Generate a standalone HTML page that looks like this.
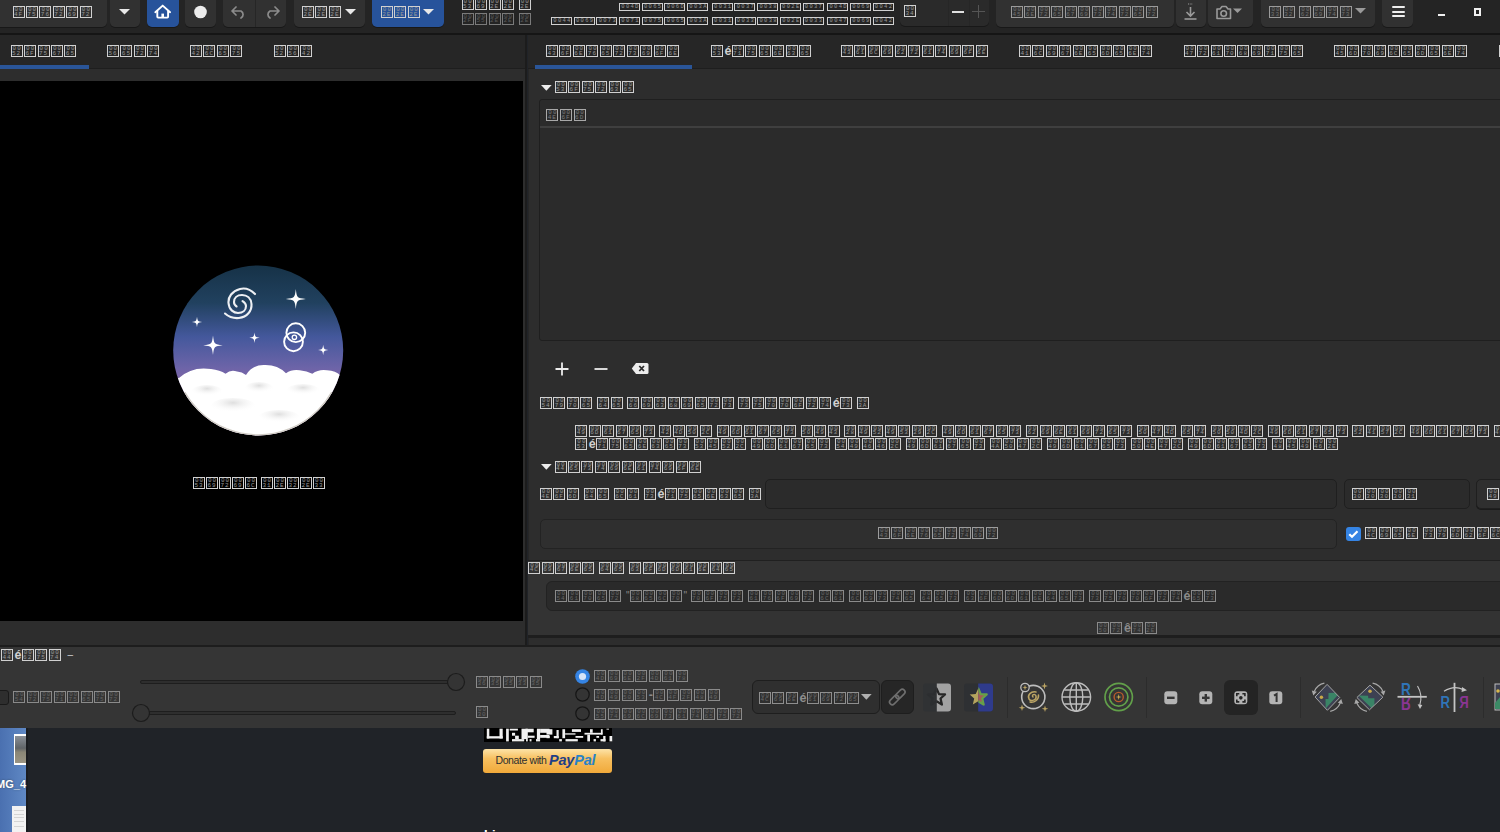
<!DOCTYPE html><html><head><meta charset="utf-8"><style>
*{margin:0;padding:0;box-sizing:border-box}
html,body{width:1500px;height:832px;overflow:hidden;background:#202328;font-family:"Liberation Sans",sans-serif}
body>div,body>p,body>svg{position:absolute}
p.t{white-space:nowrap;font-size:0;line-height:0;height:12px}
p.t i{display:inline-block;width:12px;height:12px;border:1px solid currentColor;margin-right:var(--g);-webkit-text-fill-color:var(--d);font:normal 6px/4.7px "Liberation Mono",monospace;text-align:center;overflow:hidden;vertical-align:top;padding-top:1px;letter-spacing:1px;text-indent:1px}
p.t s{display:inline-block;height:12px;vertical-align:top}
p.t u{display:inline-block;text-decoration:none;font:bold 12.5px/12px "Liberation Sans",sans-serif;vertical-align:top;margin-right:0.3px;height:12px}
p.t u.q{font:normal 10px/12px "Liberation Sans",sans-serif;margin-right:0}
p.sm{white-space:nowrap;font-size:0;line-height:0;height:8px}
p.sm i{display:inline-block;width:21px;height:8px;border:1px solid currentColor;margin-right:1.7px;font:normal 5.5px/6px "Liberation Mono",monospace;text-align:center;overflow:hidden;vertical-align:top;letter-spacing:1.3px;text-indent:1.3px;-webkit-text-fill-color:#9a9a9a}
p.sm s{display:inline-block;height:8px;vertical-align:top}
</style></head><body><div style="left:0px;top:0px;width:1500px;height:32.5px;background:#242424"></div>
<div style="left:0px;top:32.5px;width:1500px;height:2.5px;background:#151515"></div>
<div style="left:-6px;top:-6px;width:113px;height:33px;background:#313131;border-radius:5px;box-shadow:0 1px 0 #181818"></div>
<p class="t" style="left:12.5px;top:6px;color:#d0d0d0;--g:1.47px;--d:#999999;"><i>00<br>4F</i><i>00<br>75</i><i>00<br>76</i><i>00<br>72</i><i>00<br>69</i><i>00<br>72</i></p>
<div style="left:109.5px;top:-6px;width:30px;height:33px;background:#313131;border-radius:5px;box-shadow:0 1px 0 #181818"></div>
<svg style="left:119px;top:9px" width="11" height="6"><polygon points="0,0 11,0 5.5,5.5" fill="#e8e8e8"/></svg>
<div style="left:146.7px;top:-6px;width:32px;height:33px;background:#27539b;border-radius:5px;box-shadow:0 1px 0 #181818"></div>
<svg style="left:150px;top:0px" width="26" height="24" viewBox="150 0 26 24"><path d="M155.3 12.2 L162.7 5.6 L170.1 12.2" fill="none" stroke="#fff" stroke-width="1.9" stroke-linecap="round" stroke-linejoin="round"/><path d="M157.3 11 V16.8 Q157.3 17.6 158.1 17.6 H167.3 Q168.1 17.6 168.1 16.8 V11" fill="none" stroke="#fff" stroke-width="1.9"/><path d="M162.7 17.6 V13.6" stroke="#fff" stroke-width="2.6"/></svg>
<div style="left:185px;top:-6px;width:31px;height:33px;background:#313131;border-radius:5px;box-shadow:0 1px 0 #181818"></div>
<svg style="left:193px;top:5px" width="15" height="15"><circle cx="7.5" cy="7" r="6.3" fill="#ececec"/></svg>
<div style="left:223px;top:-6px;width:63px;height:33px;background:#313131;border-radius:5px;box-shadow:0 1px 0 #181818"></div>
<div style="left:255px;top:0px;width:1px;height:27px;background:#262626"></div>
<svg style="left:230px;top:5px" width="18" height="14" viewBox="0 0 18 14"><path d="M6 2 L2 6 L6 10 M2.5 6 H11 A4 4 0 0 1 11 13" fill="none" stroke="#8c8c8c" stroke-width="1.7" stroke-linecap="round" stroke-linejoin="round"/></svg>
<svg style="left:263px;top:5px" width="18" height="14" viewBox="0 0 18 14"><path d="M12 2 L16 6 L12 10 M15.5 6 H7 A4 4 0 0 0 7 13" fill="none" stroke="#8c8c8c" stroke-width="1.7" stroke-linecap="round" stroke-linejoin="round"/></svg>
<div style="left:293.8px;top:-6px;width:71px;height:33px;background:#313131;border-radius:5px;box-shadow:0 1px 0 #181818"></div>
<p class="t" style="left:302px;top:6px;color:#d0d0d0;--g:1.47px;--d:#999999;"><i>00<br>2E</i><i>00<br>2E</i><i>00<br>2E</i></p>
<svg style="left:344.5px;top:9px" width="11" height="6"><polygon points="0,0 11,0 5.5,5.5" fill="#e8e8e8"/></svg>
<div style="left:371.7px;top:-6px;width:72.5px;height:33px;background:#27539b;border-radius:5px;box-shadow:0 1px 0 #181818"></div>
<p class="t" style="left:380.8px;top:6px;color:#d0d0d0;--g:1.47px;--d:#999999;"><i>00<br>2E</i><i>00<br>2E</i><i>00<br>2E</i></p>
<svg style="left:423px;top:9px" width="11" height="6"><polygon points="0,0 11,0 5.5,5.5" fill="#e8e8e8"/></svg>
<p class="t" style="left:461.6px;top:-1.6px;color:#d0d0d0;--g:1.47px;--d:#999999;"><i>00<br>53</i><i>00<br>69</i><i>00<br>2E</i><i>00<br>2E</i><s style="width:3.3px"></s><i>00<br>2E</i></p>
<p class="t" style="left:461.6px;top:12.7px;color:#7a7a7a;--g:1.47px;--d:#5a5a5a;"><i>00<br>2F</i><i>00<br>55</i><i>00<br>2E</i><i>00<br>2E</i><s style="width:3.3px"></s><i>00<br>2E</i></p>
<p class="sm" style="left:619px;top:2.9px;color:#d0d0d0"><i>004D</i><i>0065</i><i>006D</i><i>003A</i><s style="width:2px"></s><i>0031</i><i>0037</i><i>0038</i><i>002E</i><i>0037</i><s style="width:2px"></s><i>004D</i><i>0069</i><i>0042</i></p>
<p class="sm" style="left:551px;top:17px;color:#d0d0d0"><i>0044</i><i>0069</i><i>0073</i><i>0071</i><i>0075</i><i>0065</i><i>003A</i><s style="width:2px"></s><i>0031</i><i>0033</i><i>0038</i><i>002E</i><i>0033</i><s style="width:2px"></s><i>0047</i><i>0069</i><i>0042</i></p>
<div style="left:900.3px;top:-6px;width:88.5px;height:32px;background:#2a2a2a;border-radius:5px;box-shadow:0 1px 0 #181818"></div>
<p class="t" style="left:904px;top:5.2px;color:#d0d0d0;--g:1.47px;--d:#999999;"><i>00<br>34</i></p>
<div style="left:948px;top:0px;width:1px;height:26px;background:#262626"></div>
<div style="left:968.8px;top:0px;width:1px;height:26px;background:#262626"></div>
<div style="left:951.5px;top:10.5px;width:12.5px;height:2.2px;background:#e0e0e0"></div>
<div style="left:972px;top:10.5px;width:13px;height:1.6px;background:#555"></div>
<div style="left:977.7px;top:5px;width:1.6px;height:13px;background:#555"></div>
<div style="left:996px;top:-6px;width:177.7px;height:33px;background:#313131;border-radius:5px;box-shadow:0 1px 0 #181818"></div>
<p class="t" style="left:1011px;top:6px;color:#9a9a9a;--g:1.47px;--d:#717171;"><i>00<br>45</i><i>00<br>6E</i><i>00<br>72</i><i>00<br>65</i><i>00<br>67</i><i>00<br>69</i><i>00<br>73</i><i>00<br>74</i><i>00<br>72</i><i>00<br>65</i><i>00<br>72</i></p>
<div style="left:1175.8px;top:-6px;width:30.2px;height:33px;background:#313131;border-radius:5px;box-shadow:0 1px 0 #181818"></div>
<svg style="left:1183px;top:3px" width="15" height="17" viewBox="0 0 15 17"><path d="M7.5 4 V13 M3.5 9 L7.5 13 L11.5 9" fill="none" stroke="#9a9a9a" stroke-width="1.6"/><path d="M1.5 16 H13.5" stroke="#9a9a9a" stroke-width="1.6"/><path d="M5 1 H10" stroke="#9a9a9a" stroke-width="1.2" stroke-dasharray="1.2 1.2"/></svg>
<div style="left:1208px;top:-6px;width:45px;height:33px;background:#313131;border-radius:5px;box-shadow:0 1px 0 #181818"></div>
<svg style="left:1215px;top:4px" width="32" height="16" viewBox="0 0 32 16"><path d="M2 5 H5 L7 2.5 H11 L13 5 H15.5 V14.5 H2 Z" fill="none" stroke="#9a9a9a" stroke-width="1.6" stroke-linejoin="round"/><circle cx="8.7" cy="9.5" r="2.8" fill="none" stroke="#9a9a9a" stroke-width="1.6"/><polygon points="18,4.5 27,4.5 22.5,9" fill="#9a9a9a"/></svg>
<div style="left:1261px;top:-6px;width:114px;height:33px;background:#313131;border-radius:5px;box-shadow:0 1px 0 #181818"></div>
<p class="t" style="left:1269.4px;top:6.4px;color:#9a9a9a;--g:1.47px;--d:#717171;"><i>00<br>33</i><i>00<br>32</i><s style="width:3px"></s><i>00<br>62</i><i>00<br>69</i><i>00<br>74</i><i>00<br>73</i></p>
<svg style="left:1355px;top:8px" width="11" height="6"><polygon points="0,0 11,0 5.5,5.5" fill="#9a9a9a"/></svg>
<div style="left:1382.4px;top:-6px;width:30.6px;height:33px;background:#313131;border-radius:5px;box-shadow:0 1px 0 #181818"></div>
<div style="left:1391.5px;top:6.3px;width:13px;height:2px;background:#eeeeee;border-radius:1px"></div>
<div style="left:1391.5px;top:10.7px;width:13px;height:2px;background:#eeeeee;border-radius:1px"></div>
<div style="left:1391.5px;top:15.2px;width:13px;height:2px;background:#eeeeee;border-radius:1px"></div>
<div style="left:1437.6px;top:13.6px;width:7.4px;height:2px;background:#f0f0f0"></div>
<div style="left:1473.6px;top:8px;width:7.6px;height:7.6px;border:2px solid #f0f0f0"></div>
<div style="left:0px;top:35px;width:525px;height:34px;background:#262626"></div>
<div style="left:0px;top:68px;width:525px;height:1px;background:#1e1e1e"></div>
<div style="left:0px;top:65px;width:88.7px;height:3.7px;background:#2a5598"></div>
<p class="t" style="left:10.6px;top:45px;color:#d0d0d0;--g:1.47px;--d:#999999;"><i>00<br>52</i><i>00<br>6F</i><i>00<br>75</i><i>00<br>67</i><i>00<br>65</i></p>
<p class="t" style="left:107px;top:45px;color:#d0d0d0;--g:1.47px;--d:#999999;"><i>00<br>56</i><i>00<br>65</i><i>00<br>72</i><i>00<br>74</i></p>
<p class="t" style="left:190px;top:45px;color:#d0d0d0;--g:1.47px;--d:#999999;"><i>00<br>42</i><i>00<br>6C</i><i>00<br>65</i><i>00<br>75</i></p>
<p class="t" style="left:273.5px;top:45px;color:#d0d0d0;--g:1.47px;--d:#999999;"><i>00<br>52</i><i>00<br>56</i><i>00<br>42</i></p>
<div style="left:0px;top:69px;width:525.3px;height:577px;background:#2d2d2d"></div>
<div style="left:0px;top:81px;width:523px;height:540px;background:#000"></div>
<p class="t" style="left:193px;top:477.3px;color:#d0d0d0;--g:1.00px;--d:#999999;"><i>00<br>53</i><i>00<br>69</i><i>00<br>72</i><i>00<br>69</i><i>00<br>6C</i><s style="width:3px"></s><i>00<br>31</i><i>00<br>2E</i><i>00<br>32</i><i>00<br>2E</i><i>00<br>33</i></p>
<div style="left:525.3px;top:35px;width:2.2px;height:611px;background:#1c1c1c"></div>
<div style="left:527.5px;top:35px;width:972.5px;height:34px;background:#262626"></div>
<div style="left:527.5px;top:68px;width:972.5px;height:1px;background:#1e1e1e"></div>
<div style="left:535px;top:65px;width:157px;height:3.7px;background:#2a5598"></div>
<p class="t" style="left:546px;top:45px;color:#d0d0d0;--g:1.47px;--d:#999999;"><i>00<br>43</i><i>00<br>6F</i><i>00<br>6E</i><i>00<br>76</i><i>00<br>65</i><i>00<br>72</i><i>00<br>73</i><i>00<br>69</i><i>00<br>6F</i><i>00<br>6E</i></p>
<p class="t" style="left:711px;top:45px;color:#d0d0d0;--g:1.47px;--d:#999999;"><i>00<br>53</i><u>é</u><i>00<br>71</i><i>00<br>75</i><i>00<br>65</i><i>00<br>6E</i><i>00<br>63</i><i>00<br>65</i></p>
<p class="t" style="left:841px;top:44.5px;color:#d0d0d0;--g:1.47px;--d:#999999;"><i>00<br>43</i><i>00<br>61</i><i>00<br>6C</i><i>00<br>69</i><i>00<br>62</i><i>00<br>72</i><i>00<br>61</i><i>00<br>74</i><i>00<br>69</i><i>00<br>6F</i><i>00<br>6E</i></p>
<p class="t" style="left:1019px;top:45px;color:#d0d0d0;--g:1.47px;--d:#999999;"><i>00<br>41</i><i>00<br>6C</i><i>00<br>69</i><i>00<br>67</i><i>00<br>6E</i><i>00<br>65</i><i>00<br>6D</i><i>00<br>65</i><i>00<br>6E</i><i>00<br>74</i></p>
<p class="t" style="left:1183.6px;top:45px;color:#d0d0d0;--g:1.47px;--d:#999999;"><i>00<br>47</i><i>00<br>72</i><i>00<br>61</i><i>00<br>70</i><i>00<br>68</i><i>00<br>69</i><i>00<br>71</i><i>00<br>75</i><i>00<br>65</i></p>
<p class="t" style="left:1334px;top:45px;color:#d0d0d0;--g:1.47px;--d:#999999;"><i>00<br>45</i><i>00<br>6D</i><i>00<br>70</i><i>00<br>69</i><i>00<br>6C</i><i>00<br>65</i><i>00<br>6D</i><i>00<br>65</i><i>00<br>6E</i><i>00<br>74</i></p>
<p class="t" style="left:1499px;top:45px;color:#d0d0d0;--g:1.47px;--d:#999999;"><i>00<br>43</i></p>
<div style="left:527.5px;top:69px;width:972.5px;height:577px;background:#2d2d2d"></div>
<div style="left:527.5px;top:69px;width:1.6px;height:577px;background:#262626"></div>
<svg style="left:541.3px;top:85px" width="11" height="6"><polygon points="0,0 10.7,0 5.35,5.7" fill="#ececec"/></svg>
<p class="t" style="left:554.7px;top:81px;color:#d0d0d0;--g:1.47px;--d:#999999;"><i>00<br>53</i><i>00<br>6F</i><i>00<br>75</i><i>00<br>72</i><i>00<br>63</i><i>00<br>65</i></p>
<div style="left:539.3px;top:99px;width:975px;height:241.8px;background:#2b2b2b;border:1px solid #1f1f1f;border-radius:3px"></div>
<div style="left:540.3px;top:126px;width:965px;height:2px;background:#3f3f3f"></div>
<p class="t" style="left:546.3px;top:109px;color:#a8a8a8;--g:1.70px;--d:#7c7c7c;"><i>00<br>4E</i><i>00<br>6F</i><i>00<br>6D</i></p>
<svg style="left:554px;top:361px" width="16" height="16"><path d="M8 1.5 V14.5 M1.5 8 H14.5" stroke="#ececec" stroke-width="1.8"/></svg>
<svg style="left:593px;top:361px" width="16" height="16"><path d="M1.5 8 H14.5" stroke="#ececec" stroke-width="1.8"/></svg>
<svg style="left:631px;top:362px" width="18" height="13" viewBox="0 0 18 13"><path d="M5 1 H16 A1.5 1.5 0 0 1 17.5 2.5 V10.5 A1.5 1.5 0 0 1 16 12 H5 L0.8 6.5 Z" fill="#ececec"/><path d="M8.3 4 L13 9 M13 4 L8.3 9" stroke="#2d2d2d" stroke-width="1.8"/></svg>
<p class="t" style="left:540px;top:397.2px;color:#d0d0d0;--g:1.47px;--d:#999999;"><i>00<br>54</i><i>00<br>79</i><i>00<br>70</i><i>00<br>65</i><s style="width:3.3px"></s><i>00<br>64</i><i>00<br>65</i><s style="width:3.3px"></s><i>00<br>66</i><i>00<br>69</i><i>00<br>63</i><i>00<br>68</i><i>00<br>69</i><i>00<br>65</i><i>00<br>72</i><i>00<br>73</i><s style="width:3.3px"></s><i>00<br>73</i><i>00<br>75</i><i>00<br>70</i><i>00<br>70</i><i>00<br>6F</i><i>00<br>72</i><i>00<br>74</i><u>é</u><i>00<br>73</i><s style="width:3.3px"></s><i>00<br>3A</i></p>
<p class="t" style="left:575.3px;top:424.5px;color:#d0d0d0;--g:1.47px;--d:#999999;"><i>00<br>49</i><i>00<br>6D</i><i>00<br>61</i><i>00<br>67</i><i>00<br>65</i><i>00<br>73</i><s style="width:3.3px"></s><i>00<br>42</i><i>00<br>4D</i><i>00<br>50</i><i>00<br>2C</i><s style="width:3.3px"></s><i>00<br>49</i><i>00<br>6D</i><i>00<br>61</i><i>00<br>67</i><i>00<br>65</i><i>00<br>73</i><s style="width:3.3px"></s><i>00<br>50</i><i>00<br>49</i><i>00<br>43</i><s style="width:3.3px"></s><i>00<br>28</i><i>00<br>49</i><i>00<br>52</i><i>00<br>49</i><i>00<br>53</i><i>00<br>29</i><i>00<br>2C</i><s style="width:3.3px"></s><i>00<br>49</i><i>00<br>6D</i><i>00<br>61</i><i>00<br>67</i><i>00<br>65</i><i>00<br>73</i><s style="width:3.3px"></s><i>00<br>62</i><i>00<br>69</i><i>00<br>6E</i><i>00<br>61</i><i>00<br>69</i><i>00<br>72</i><i>00<br>65</i><i>00<br>73</i><s style="width:3.3px"></s><i>00<br>50</i><i>00<br>47</i><i>00<br>4D</i><s style="width:3.3px"></s><i>00<br>65</i><i>00<br>74</i><s style="width:3.3px"></s><i>00<br>50</i><i>00<br>50</i><i>00<br>4D</i><i>00<br>2C</i><s style="width:3.3px"></s><i>00<br>49</i><i>00<br>6D</i><i>00<br>61</i><i>00<br>67</i><i>00<br>65</i><i>00<br>73</i><s style="width:3.3px"></s><i>00<br>52</i><i>00<br>41</i><i>00<br>57</i><i>00<br>2C</i><s style="width:3.3px"></s><i>00<br>49</i><i>00<br>6D</i><i>00<br>61</i><i>00<br>67</i><i>00<br>65</i><i>00<br>73</i><s style="width:3.3px"></s><i>00<br>46</i><i>00<br>49</i><i>00<br>54</i><i>00<br>53</i></p>
<p class="t" style="left:575.3px;top:438.3px;color:#d0d0d0;--g:1.47px;--d:#999999;"><i>00<br>53</i><u>é</u><i>00<br>71</i><i>00<br>75</i><i>00<br>65</i><i>00<br>6E</i><i>00<br>63</i><i>00<br>65</i><i>00<br>73</i><s style="width:3.3px"></s><i>00<br>53</i><i>00<br>45</i><i>00<br>52</i><i>00<br>2C</i><s style="width:3.3px"></s><i>00<br>49</i><i>00<br>6D</i><i>00<br>61</i><i>00<br>67</i><i>00<br>65</i><i>00<br>73</i><s style="width:3.3px"></s><i>00<br>54</i><i>00<br>49</i><i>00<br>46</i><i>00<br>46</i><i>00<br>2C</i><s style="width:3.3px"></s><i>00<br>49</i><i>00<br>6D</i><i>00<br>61</i><i>00<br>67</i><i>00<br>65</i><i>00<br>73</i><s style="width:3.3px"></s><i>00<br>4A</i><i>00<br>50</i><i>00<br>47</i><i>00<br>2C</i><s style="width:3.3px"></s><i>00<br>49</i><i>00<br>6D</i><i>00<br>61</i><i>00<br>67</i><i>00<br>65</i><i>00<br>73</i><s style="width:3.3px"></s><i>00<br>50</i><i>00<br>4E</i><i>00<br>47</i><i>00<br>2C</i><s style="width:3.3px"></s><i>00<br>49</i><i>00<br>6D</i><i>00<br>61</i><i>00<br>67</i><i>00<br>65</i><i>00<br>73</i><s style="width:3.3px"></s><i>00<br>48</i><i>00<br>45</i><i>00<br>49</i><i>00<br>46</i><i>00<br>2E</i></p>
<svg style="left:541.3px;top:464px" width="11" height="6"><polygon points="0,0 10.7,0 5.35,5.7" fill="#ececec"/></svg>
<p class="t" style="left:554.5px;top:460.6px;color:#d0d0d0;--g:1.47px;--d:#999999;"><i>00<br>44</i><i>00<br>65</i><i>00<br>73</i><i>00<br>74</i><i>00<br>69</i><i>00<br>6E</i><i>00<br>61</i><i>00<br>74</i><i>00<br>69</i><i>00<br>6F</i><i>00<br>6E</i></p>
<p class="t" style="left:539.8px;top:487.8px;color:#d0d0d0;--g:1.47px;--d:#999999;"><i>00<br>4E</i><i>00<br>6F</i><i>00<br>6D</i><s style="width:3.3px"></s><i>00<br>64</i><i>00<br>65</i><s style="width:3.3px"></s><i>00<br>6C</i><i>00<br>61</i><s style="width:3.3px"></s><i>00<br>73</i><u>é</u><i>00<br>71</i><i>00<br>75</i><i>00<br>65</i><i>00<br>6E</i><i>00<br>63</i><i>00<br>65</i><s style="width:3.3px"></s><i>00<br>3A</i></p>
<div style="left:764.6px;top:479.3px;width:572.8px;height:29.7px;background:#2b2b2b;border:1px solid #1f1f1f;border-radius:5px"></div>
<div style="left:1343.5px;top:479.3px;width:126.8px;height:29.7px;background:#2b2b2b;border:1px solid #1f1f1f;border-radius:5px"></div>
<p class="t" style="left:1351.5px;top:487.9px;color:#d0d0d0;--g:1.47px;--d:#999999;"><i>00<br>30</i><i>00<br>30</i><i>00<br>30</i><i>00<br>30</i><i>00<br>31</i></p>
<div style="left:1476.2px;top:479.3px;width:60px;height:29.7px;background:#2f2f2f;border:1px solid #1f1f1f;border-radius:5px;box-shadow:0 1px 0 #1a1a1a"></div>
<p class="t" style="left:1487px;top:487.9px;color:#d0d0d0;--g:1.47px;--d:#999999;"><i>00<br>49</i></p>
<div style="left:539.8px;top:518.5px;width:797.6px;height:30px;background:#2f2f2f;border:1px solid #232323;border-radius:5px"></div>
<p class="t" style="left:878px;top:527px;color:#9c9c9c;--g:1.47px;--d:#737373;"><i>00<br>43</i><i>00<br>6F</i><i>00<br>6E</i><i>00<br>76</i><i>00<br>65</i><i>00<br>72</i><i>00<br>74</i><i>00<br>69</i><i>00<br>72</i></p>
<div style="left:1346.3px;top:526.8px;width:14.7px;height:14.2px;background:#3584e4;border-radius:3px"></div>
<svg style="left:1346.3px;top:526.8px" width="15" height="14"><path d="M3.3 7.2 L6 9.8 L11.5 4.3" fill="none" stroke="#fff" stroke-width="2.2"/></svg>
<p class="t" style="left:1365.2px;top:527px;color:#d0d0d0;--g:1.47px;--d:#999999;"><i>00<br>4C</i><i>00<br>69</i><i>00<br>65</i><i>00<br>6E</i><s style="width:3.6px"></s><i>00<br>73</i><i>00<br>79</i><i>00<br>6D</i><i>00<br>62</i><i>00<br>6F</i><i>00<br>6C</i><i>00<br>69</i><i>00<br>71</i><i>00<br>75</i><i>00<br>65</i></p>
<div style="left:527.5px;top:559.7px;width:972.5px;height:1.6px;background:#202020"></div>
<div style="left:527.5px;top:561.3px;width:972.5px;height:73.7px;background:#333333"></div>
<p class="t" style="left:528.3px;top:561.7px;color:#d0d0d0;--g:1.47px;--d:#999999;"><i>00<br>4C</i><i>00<br>69</i><i>00<br>67</i><i>00<br>6E</i><i>00<br>65</i><s style="width:3.3px"></s><i>00<br>64</i><i>00<br>65</i><s style="width:3.3px"></s><i>00<br>63</i><i>00<br>6F</i><i>00<br>6D</i><i>00<br>6D</i><i>00<br>61</i><i>00<br>6E</i><i>00<br>64</i><i>00<br>65</i></p>
<div style="left:546.3px;top:581.3px;width:1000px;height:29.7px;background:#2a2a2a;border:1px solid #222;border-radius:6px"></div>
<p class="t" style="left:555px;top:590px;color:#8a8a8a;--g:1.47px;--d:#666666;"><i>00<br>54</i><i>00<br>61</i><i>00<br>70</i><i>00<br>65</i><i>00<br>72</i><s style="width:3.6px"></s><u class="q">&quot;</u><i>00<br>68</i><i>00<br>65</i><i>00<br>6C</i><i>00<br>70</i><u class="q">&quot;</u><s style="width:3.6px"></s><i>00<br>70</i><i>00<br>6F</i><i>00<br>75</i><i>00<br>72</i><s style="width:3.6px"></s><i>00<br>61</i><i>00<br>76</i><i>00<br>6F</i><i>00<br>69</i><i>00<br>72</i><s style="width:3.6px"></s><i>00<br>6C</i><i>00<br>61</i><s style="width:3.6px"></s><i>00<br>6C</i><i>00<br>69</i><i>00<br>73</i><i>00<br>74</i><i>00<br>65</i><s style="width:3.6px"></s><i>00<br>64</i><i>00<br>65</i><i>00<br>73</i><s style="width:3.6px"></s><i>00<br>63</i><i>00<br>6F</i><i>00<br>6D</i><i>00<br>6D</i><i>00<br>61</i><i>00<br>6E</i><i>00<br>64</i><i>00<br>65</i><i>00<br>73</i><s style="width:3.6px"></s><i>00<br>73</i><i>00<br>75</i><i>00<br>70</i><i>00<br>70</i><i>00<br>6F</i><i>00<br>72</i><i>00<br>74</i><u>é</u><i>00<br>65</i><i>00<br>73</i></p>
<p class="t" style="left:1097px;top:622.4px;color:#8a8a8a;--g:1.47px;--d:#666666;"><i>00<br>50</i><i>00<br>72</i><u>ê</u><i>00<br>74</i><i>00<br>2E</i></p>
<div style="left:527.5px;top:635px;width:972.5px;height:3.4px;background:#1e1e1e"></div>
<div style="left:0px;top:645.3px;width:1500px;height:2px;background:#1d1d1d"></div>
<div style="left:0px;top:647.3px;width:1500px;height:80.7px;background:#353535"></div>
<p class="t" style="left:1px;top:649.3px;color:#d0d0d0;--g:1.47px;--d:#999999;"><i>00<br>44</i><u>é</u><i>00<br>62</i><i>00<br>75</i><i>00<br>74</i><s style="width:3.3px"></s><u class="q" style="margin-left:2px">–</u></p>
<div style="left:-6px;top:690.4px;width:14.7px;height:14.3px;background:#2e2e2e;border:1px solid #1a1a1a;border-radius:3px"></div>
<p class="t" style="left:13.3px;top:691px;color:#8a8a8a;--g:1.47px;--d:#666666;"><i>00<br>54</i><i>00<br>72</i><i>00<br>75</i><i>00<br>71</i><i>00<br>75</i><i>00<br>65</i><i>00<br>75</i><i>00<br>72</i></p>
<div style="left:140px;top:680px;width:316px;height:4px;background:#2e2e2e;border:1px solid #1e1e1e;border-radius:2px"></div>
<svg style="left:445.5px;top:672px" width="20" height="20"><circle cx="10" cy="10" r="8.5" fill="#343434" stroke="#1c1c1c" stroke-width="1.2"/></svg>
<div style="left:140px;top:711.3px;width:316px;height:3.7px;background:#2e2e2e;border:1px solid #1e1e1e;border-radius:2px"></div>
<svg style="left:131px;top:703px" width="20" height="20"><circle cx="10" cy="10" r="8.5" fill="#343434" stroke="#1c1c1c" stroke-width="1.2"/></svg>
<p class="t" style="left:476px;top:675.6px;color:#8a8a8a;--g:1.47px;--d:#666666;"><i>00<br>36</i><i>00<br>35</i><i>00<br>35</i><i>00<br>33</i><i>00<br>35</i></p>
<p class="t" style="left:476px;top:706px;color:#8a8a8a;--g:1.47px;--d:#666666;"><i>00<br>30</i></p>
<svg style="left:575px;top:668.5px" width="15" height="15"><circle cx="7.5" cy="7.5" r="7.3" fill="#3584e4"/><circle cx="7.5" cy="7.5" r="3.6" fill="#d6e4f8"/></svg>
<svg style="left:575px;top:687px" width="15" height="15"><circle cx="7.5" cy="7.5" r="6.7" fill="#343434" stroke="#151515" stroke-width="1.2"/></svg>
<svg style="left:575px;top:706px" width="15" height="15"><circle cx="7.5" cy="7.5" r="6.7" fill="#343434" stroke="#151515" stroke-width="1.2"/></svg>
<p class="t" style="left:594.4px;top:670px;color:#8a8a8a;--g:1.60px;--d:#666666;"><i>00<br>4D</i><i>00<br>69</i><i>00<br>6E</i><i>00<br>2F</i><i>00<br>4D</i><i>00<br>61</i><i>00<br>78</i></p>
<p class="t" style="left:594.4px;top:689px;color:#8a8a8a;--g:1.60px;--d:#666666;"><i>00<br>4D</i><i>00<br>49</i><i>00<br>50</i><i>00<br>53</i><u>-</u><i>00<br>4C</i><i>00<br>4F</i><i>00<br>2F</i><i>00<br>48</i><i>00<br>49</i></p>
<p class="t" style="left:594.4px;top:708px;color:#8a8a8a;--g:1.60px;--d:#666666;"><i>00<br>55</i><i>00<br>74</i><i>00<br>69</i><i>00<br>6C</i><i>00<br>69</i><i>00<br>73</i><i>00<br>61</i><i>00<br>74</i><i>00<br>65</i><i>00<br>75</i><i>00<br>72</i></p>
<div style="left:752px;top:680.3px;width:127.5px;height:33.7px;background:#2f2f2f;border:1px solid #1e1e1e;border-radius:6px"></div>
<p class="t" style="left:759px;top:691.6px;color:#8e8e8e;--g:1.47px;--d:#696969;"><i>00<br>4C</i><i>00<br>69</i><i>00<br>6E</i><u>é</u><i>00<br>61</i><i>00<br>69</i><i>00<br>72</i><i>00<br>65</i></p>
<svg style="left:861px;top:693.7px" width="11" height="6"><polygon points="0,0 10.7,0 5.35,5.7" fill="#b0b0b0"/></svg>
<div style="left:880.7px;top:680.3px;width:33.3px;height:33.7px;background:#262626;border:1px solid #1e1e1e;border-radius:6px"></div>
<svg style="left:884px;top:684px" width="26" height="26" viewBox="884 684 26 26"><g transform="rotate(-45 897.3 697)" fill="none" stroke="#6e6e6e" stroke-width="1.6"><rect x="887.5" y="694.3" width="11" height="5.4" rx="2.7"/><rect x="896.1" y="694.3" width="11" height="5.4" rx="2.7"/></g></svg>
<div style="left:0px;top:728px;width:26px;height:104px;background:linear-gradient(90deg,#4a70b0,#5f88c4)"></div>
<div style="left:13.5px;top:734px;width:12.5px;height:30.5px;background:#fff"></div>
<div style="left:15px;top:736px;width:11px;height:27px;background:linear-gradient(#8a9098,#606468 45%,#8a8676 60%,#9a9484)"></div>
<div style="left:26px;top:728px;width:2px;height:104px;background:#1a1c20"></div>
<p style="left:-7px;top:777px;font:bold 11px/14px 'Liberation Sans';color:#fff;white-space:nowrap;text-shadow:0 0 2px #345">IMG_4</p>
<p style="left:484px;top:828px;font:bold 13px/14px 'Liberation Sans';color:#fff;white-space:nowrap">Li</p>
<div style="left:12px;top:806px;width:14px;height:26px;background:#f2f2f2"></div>
<div style="left:14px;top:810px;width:10px;height:1px;background:#d4d4d4"></div>
<div style="left:14px;top:814px;width:10px;height:1px;background:#d4d4d4"></div>
<div style="left:14px;top:817px;width:10px;height:1px;background:#d4d4d4"></div>
<div style="left:14px;top:821px;width:10px;height:1px;background:#d4d4d4"></div>
<div style="left:14px;top:826px;width:10px;height:1px;background:#d4d4d4"></div>
<div style="left:483.5px;top:728px;width:128.5px;height:13.5px;background:#000"></div>
<svg style="left:483.5px;top:728px" width="129" height="14" fill="#f0f0f0"><rect x="2.8" y="0.7" width="2.5" height="9.8"/><rect x="15.5" y="0.7" width="3.2" height="9.8"/><rect x="2.8" y="8.2" width="15.9" height="2.3"/><rect x="22.1" y="0.7" width="2.7" height="12.7"/><rect x="28.0" y="4.8" width="3.1" height="2.9"/><rect x="28.0" y="11.1" width="12.2" height="2.3"/><rect x="31.1" y="7.7" width="3.7" height="3.4"/><rect x="25.7" y="0.7" width="8.2" height="1.8"/><rect x="37.5" y="0.7" width="6.3" height="10.4"/><rect x="41.5" y="0.7" width="8.2" height="3.6"/><rect x="43.8" y="7.7" width="6.8" height="2.1"/><rect x="42.0" y="11.1" width="1.8" height="2.3"/><rect x="45.6" y="11.1" width="1.9" height="2.3"/><rect x="52.0" y="11.1" width="4.1" height="2.3"/><rect x="52.9" y="0.7" width="3.2" height="10.4"/><rect x="56.1" y="0.7" width="9.4" height="4.1"/><rect x="56.1" y="7.0" width="9.4" height="2.8"/><rect x="62.5" y="1.2" width="5.9" height="5.4"/><rect x="62.5" y="8.0" width="3.2" height="2.2"/><rect x="72.5" y="2.0" width="2.2" height="8.2"/><rect x="69.8" y="8.0" width="4.9" height="2.2"/><rect x="75.2" y="11.1" width="2.7" height="2.3"/><rect x="78.4" y="1.2" width="2.7" height="9.0"/><rect x="81.1" y="5.3" width="10.4" height="1.3"/><rect x="87.9" y="1.2" width="9.1" height="2.7"/><rect x="81.5" y="11.1" width="12.3" height="2.3"/><rect x="91.5" y="8.0" width="7.7" height="1.8"/><rect x="100.5" y="4.8" width="17.8" height="1.8"/><rect x="106.0" y="1.2" width="2.7" height="3.6"/><rect x="116.9" y="1.2" width="1.8" height="5.4"/><rect x="103.3" y="6.6" width="2.7" height="6.8"/><rect x="109.6" y="11.1" width="2.3" height="2.3"/><rect x="112.4" y="8.0" width="2.7" height="1.8"/><rect x="116.5" y="11.1" width="5.0" height="2.3"/><rect x="119.2" y="8.0" width="2.3" height="5.4"/><rect x="125.5" y="8.0" width="2.7" height="5.4"/><rect x="122.5" y="0.7" width="2.5" height="0.9"/></svg>
<div style="left:483.2px;top:748.7px;width:128.8px;height:24.7px;background:linear-gradient(#fde3a8,#f7c060 40%,#f0a93a);border-radius:3px"></div>
<p style="left:495.5px;top:754px;font:10.5px/12px 'Liberation Sans';color:#2e2e2e;white-space:nowrap;letter-spacing:-0.4px">Donate with</p>
<p style="left:549px;top:752px;font:italic bold 14.5px/16px 'Liberation Sans';white-space:nowrap;letter-spacing:-0.2px"><span style="color:#1f3f86">Pay</span><span style="color:#2882c8">Pal</span></p>
<svg style="left:168px;top:260px" width="180" height="182" viewBox="168 260 180 182"><defs><linearGradient id="sky" x1="0" y1="0" x2="0" y2="1"><stop offset="0" stop-color="#163247"/><stop offset="0.22" stop-color="#21415f"/><stop offset="0.42" stop-color="#44589c"/><stop offset="0.6" stop-color="#6c64a8"/><stop offset="0.7" stop-color="#8466a6"/><stop offset="1" stop-color="#8a68a6"/></linearGradient><clipPath id="bot"><rect x="160" y="392" width="200" height="60"/></clipPath><clipPath id="cc"><circle cx="258.2" cy="350.5" r="85"/></clipPath><radialGradient id="sh" cx="0.5" cy="0.3" r="0.6"><stop offset="0" stop-color="#dedede"/><stop offset="1" stop-color="#fff" stop-opacity="0"/></radialGradient></defs><circle cx="258.2" cy="350.5" r="85" fill="url(#sky)"/><g clip-path="url(#cc)"><path d="M168 382 Q172 376 179 378 Q192 366 211 369 Q220 370 225.5 373.7 Q231 369 237 371.5 Q242 372 246 374.9 Q253 364 265.5 365 Q278 365 286 373.3 Q292 369 299.7 370.3 Q307 371 312.3 373.7 Q319 369 327 370.3 Q336 371 340 375 Q345 377 350 378 V440 H168 Z" fill="#fff"/><ellipse cx="207" cy="391" rx="15" ry="6" fill="url(#sh)"/><ellipse cx="259" cy="388" rx="14" ry="6" fill="url(#sh)"/><ellipse cx="303" cy="390" rx="16" ry="6" fill="url(#sh)"/><ellipse cx="233" cy="406" rx="22" ry="8" fill="url(#sh)"/><ellipse cx="279" cy="417" rx="20" ry="7" fill="url(#sh)"/><circle cx="258.2" cy="350.5" r="85" fill="none" stroke="#d0ccc4" stroke-width="2.5" clip-path="url(#bot)"/></g><path d="M295.8 289 C296.90000000000003 297.9 296.90000000000003 297.9 305.8 299 C296.90000000000003 300.1 296.90000000000003 300.1 295.8 309 C294.7 300.1 294.7 300.1 285.8 299 C294.7 297.9 294.7 297.9 295.8 289Z" fill="#fff"/><path d="M213 335.4 C214.1 344.09999999999997 214.1 344.09999999999997 222.8 345.2 C214.1 346.3 214.1 346.3 213 355.0 C211.9 346.3 211.9 346.3 203.2 345.2 C211.9 344.09999999999997 211.9 344.09999999999997 213 335.4Z" fill="#fff"/><path d="M197 316.8 C197.7 321.3 197.7 321.3 202.2 322 C197.7 322.7 197.7 322.7 197 327.2 C196.3 322.7 196.3 322.7 191.8 322 C196.3 321.3 196.3 321.3 197 316.8Z" fill="#fff"/><path d="M254.5 332.5 C255.2 337.0 255.2 337.0 259.7 337.7 C255.2 338.4 255.2 338.4 254.5 342.9 C253.8 338.4 253.8 338.4 249.3 337.7 C253.8 337.0 253.8 337.0 254.5 332.5Z" fill="#fff"/><path d="M323.2 344.7 C323.9 349.2 323.9 349.2 328.4 349.9 C323.9 350.59999999999997 323.9 350.59999999999997 323.2 355.09999999999997 C322.5 350.59999999999997 322.5 350.59999999999997 318.0 349.9 C322.5 349.2 322.5 349.2 323.2 344.7Z" fill="#fff"/><path d="M255 294.1 C250 289 244 288 240 289 C232 291 228 297 228.5 303 C229 310 234 313 238 313 C243 313 246 310 246 306 C246 304 244 302 242.6 301.1" fill="none" stroke="#eef0f4" stroke-width="2.1" stroke-linecap="round"/><path d="M225 313.5 C229 317 234 318.5 239 318 C247 317 252 311 251.5 304 C251 298 247 295 242 295 C237 295 234 298 234 302 C234 304 235 305.5 236.6 306.5" fill="none" stroke="#eef0f4" stroke-width="2.1" stroke-linecap="round"/><circle cx="295.8" cy="332.7" r="9.4" fill="none" stroke="#fff" stroke-width="1.9"/><circle cx="293.5" cy="341.8" r="9.4" fill="none" stroke="#fff" stroke-width="1.9"/><circle cx="294.4" cy="337.3" r="2.2" fill="none" stroke="#fff" stroke-width="1.3"/></svg>
<svg style="left:922.8px;top:683px" width="28" height="29" viewBox="0 0 28 29"><defs><clipPath id="rh"><rect x="14" y="-2" width="16" height="32"/></clipPath><clipPath id="lh"><rect x="-2" y="-2" width="16" height="32"/></clipPath></defs><rect x="0" y="0.5" width="28" height="28" rx="3" fill="#303234"/><path d="M13.8 0.5 H25 A3 3 0 0 1 28 3.5 V25.5 A3 3 0 0 1 25 28.5 H13.8 Z" fill="#a2a2a2"/><g transform="translate(-0.5,0.5)"><path d="M14 5 L16.5 10.6 L22.5 11 L18 15 L19.4 21 L14 17.8 L8.6 21 L10 15 L5.5 11 L11.5 10.6 Z" fill="none" stroke="#262626" stroke-width="2.3" stroke-linejoin="round" clip-path="url(#rh)"/><path d="M14 5 L16.5 10.6 L22.5 11 L18 15 L19.4 21 L14 17.8 L8.6 21 L10 15 L5.5 11 L11.5 10.6 Z" fill="none" stroke="#2c2e30" stroke-width="2.3" stroke-linejoin="round" clip-path="url(#lh)"/></g></svg>
<svg style="left:964.4px;top:683px" width="29" height="29" viewBox="0 0 29 29"><defs><clipPath id="rh2"><rect x="14.2" y="-2" width="16" height="32"/></clipPath><clipPath id="lh2"><rect x="-2" y="-2" width="16.2" height="32"/></clipPath></defs><rect x="0" y="0.5" width="29" height="28" rx="3" fill="#2e3033"/><path d="M14.2 0.5 H26 A3 3 0 0 1 29 3.5 V25.5 A3 3 0 0 1 26 28.5 H14.2 Z" fill="#2f3b8c"/><g transform="translate(0.2,0.5)"><path d="M14 5 L16.5 10.6 L22.5 11 L18 15 L19.4 21 L14 17.8 L8.6 21 L10 15 L5.5 11 L11.5 10.6 Z" fill="#b4a45e" clip-path="url(#lh2)"/><path d="M14 5 L16.5 10.6 L22.5 11 L18 15 L19.4 21 L14 17.8 L8.6 21 L10 15 L5.5 11 L11.5 10.6 Z" fill="#a85a58" stroke="#68a048" stroke-width="2.3" stroke-linejoin="round" clip-path="url(#rh2)"/></g></svg>
<div style="left:1006.5px;top:676.7px;width:1px;height:41.3px;background:#2c2c2c"></div>
<svg style="left:1016px;top:680px" width="34" height="34" viewBox="1016 680 34 34"><circle cx="1033.3" cy="697" r="11.6" fill="none" stroke="#bdbdbd" stroke-width="1.6"/><circle cx="1025" cy="687.5" r="4.2" fill="#353535" stroke="#bdbdbd" stroke-width="1.3"/><path d="M1025 684.8 L1025.7 687 L1027.7 687.5 L1025.7 688 L1025 690.2 L1024.3 688 L1022.3 687.5 L1024.3 687 Z" fill="#bba464"/><path d="M1044.5 682.5 L1045.3 685.2 L1048 686 L1045.3 686.8 L1044.5 689.5 L1043.7 686.8 L1041 686 L1043.7 685.2 Z" fill="#bba464"/><path d="M1022 704.5 L1022.8 707 L1025.3 707.8 L1022.8 708.6 L1022 711 L1021.2 708.6 L1018.7 707.8 L1021.2 707 Z" fill="#bba464"/><path d="M1045 705.5 L1045.8 708 L1048.3 708.8 L1045.8 709.6 L1045 712 L1044.2 709.6 L1041.7 708.8 L1044.2 708 Z" fill="#bba464"/><path d="M1033 697 C1031 695 1035 693 1036 696 C1037 700 1031 702 1029 699 C1027 695 1031 691 1036 692 M1030 702 C1034 703 1039 700 1038.5 695" fill="none" stroke="#bba464" stroke-width="1.5" stroke-linecap="round"/></svg>
<svg style="left:1060px;top:681px" width="33" height="33" viewBox="1060 681 33 33"><g fill="none" stroke="#bdbdbd" stroke-width="1.4"><circle cx="1076.3" cy="697" r="14.3"/><ellipse cx="1076.3" cy="697" rx="6.5" ry="14.3"/><path d="M1076.3 682.7 V711.3 M1062 697 H1090.6 M1064.3 690 H1088.3 M1064.3 704 H1088.3"/></g></svg>
<svg style="left:1103px;top:681px" width="32" height="33" viewBox="1103 681 32 33"><circle cx="1118.7" cy="697" r="13.7" fill="none" stroke="#62a04a" stroke-width="1.7"/><circle cx="1118.7" cy="697" r="9.2" fill="none" stroke="#62a04a" stroke-width="1.7"/><circle cx="1118.7" cy="697" r="4.6" fill="none" stroke="#b85c2c" stroke-width="1.4"/><path d="M1118.7 694 L1119.3 696.4 L1121.7 697 L1119.3 697.6 L1118.7 700 L1118.1 697.6 L1115.7 697 L1118.1 696.4 Z" fill="#d8b050"/></svg>
<div style="left:1146px;top:676.7px;width:1px;height:41.3px;background:#2c2c2c"></div>
<svg style="left:1163.5px;top:690.5px" width="14" height="14"><rect x="0.3" y="0.3" width="13" height="13" rx="3" fill="#b4b4b4"/><rect x="3" y="5.6" width="7.6" height="2.4" fill="#353535"/></svg>
<svg style="left:1198.8px;top:690.5px" width="14" height="14"><rect x="0.3" y="0.3" width="13" height="13" rx="3" fill="#b4b4b4"/><rect x="3" y="5.6" width="7.6" height="2.4" fill="#353535"/><rect x="5.6" y="3" width="2.4" height="7.6" fill="#353535"/></svg>
<div style="left:1223.7px;top:680px;width:34.2px;height:34.5px;background:#242424;border-radius:6px"></div>
<svg style="left:1233.8px;top:691px" width="14" height="14"><rect x="0.3" y="0.3" width="13" height="13" rx="3" fill="#b4b4b4"/><path d="M2.8 5.3 V2.8 H5.3 M8.4 2.8 H10.9 V5.3 M10.9 8.4 V10.9 H8.4 M5.3 10.9 H2.8 V8.4" fill="none" stroke="#242424" stroke-width="1.6"/><circle cx="6.85" cy="6.85" r="1.8" fill="#242424"/></svg>
<svg style="left:1268.8px;top:691px" width="14" height="14"><rect x="0.3" y="0.3" width="13" height="13" rx="3" fill="#b4b4b4"/><path d="M5 4.6 L7.6 3 V11" fill="none" stroke="#353535" stroke-width="2"/></svg>
<div style="left:1300px;top:676.7px;width:1px;height:41.3px;background:#2c2c2c"></div>
<svg style="left:1306px;top:678px" width="86" height="38" viewBox="1306 678 86 38"><path d="M1327.1 684.4 L1339.7 697.5 L1327.4 710.3 L1315.1 697 Z" fill="#3d4152"/><path d="M1325.5 699.1 L1328.4 699.1 L1328.5 693 L1335.2 692.8 L1337.6 695.3 L1325.7 708.4 Z" fill="#3a8466"/><circle cx="1321.4" cy="697.2" r="1.75" fill="#c8a848"/><path d="M1327.1 684.4 L1339.7 697.5 L1327.4 710.3 L1315.1 697 Z" fill="none" stroke="#a4a4a4" stroke-width="1"/><path d="M1324.4 683.2 A14 14 0 0 0 1314.3 691.5" fill="none" stroke="#a8a8a8" stroke-width="1.2"/><path d="M1311.8 690.6 L1316.8 691.8 L1313.3 695.6 Z" fill="#a8a8a8"/><path d="M1330.2 711.4 A14 14 0 0 0 1340.3 703.1" fill="none" stroke="#a8a8a8" stroke-width="1.2"/><path d="M1342.8 704 L1337.8 702.8 L1341.3 699 Z" fill="#a8a8a8"/><path d="M1370 685.2 L1382.9 697.2 L1369.5 709.8 L1356.9 697.5 Z" fill="#3d4152"/><path d="M1358.6 695.6 L1368.1 695.7 L1368.3 698.3 L1374.4 698.3 L1374.4 704.9 L1371.4 707.9 Z" fill="#3a8466"/><circle cx="1370" cy="691.2" r="1.75" fill="#c8a848"/><path d="M1370 685.2 L1382.9 697.2 L1369.5 709.8 L1356.9 697.5 Z" fill="none" stroke="#a4a4a4" stroke-width="1"/><path d="M1372.6 683.2 A14 14 0 0 1 1382.9 691.5" fill="none" stroke="#a8a8a8" stroke-width="1.2"/><path d="M1380.6 691.8 L1385.4 690.5 L1383.8 695.6 Z" fill="#a8a8a8"/><path d="M1366.9 711.4 A14 14 0 0 1 1356.8 703.1" fill="none" stroke="#a8a8a8" stroke-width="1.2"/><path d="M1354.3 704 L1359.3 702.8 L1355.8 699 Z" fill="#a8a8a8"/></svg>
<svg style="left:1396px;top:681px" width="33" height="32" viewBox="0 0 33 32"><g transform="translate(5,14) scale(0.85,1)"><text x="0" y="0" font-family="Liberation Sans" font-weight="bold" font-size="16" fill="#2f74b8">R</text></g><g transform="translate(5,17.4) scale(0.85,-1)"><text x="0" y="0" font-family="Liberation Sans" font-weight="bold" font-size="16" fill="#8a3593">R</text></g><path d="M1.5 15.8 H30.8" stroke="#c4c4c4" stroke-width="1.8"/><path d="M21.5 5 Q27 14 23.8 24" fill="none" stroke="#c4c4c4" stroke-width="1.1"/><path d="M21.6 23.2 L24 28 L26.3 24 Z" fill="#c4c4c4"/></svg>
<svg style="left:1439px;top:682px" width="32" height="31" viewBox="0 0 32 31"><g transform="translate(1.5,25.6) scale(0.82,1)"><text x="0" y="0" font-family="Liberation Sans" font-weight="bold" font-size="16" fill="#2f74b8">R</text></g><g transform="translate(29.8,25.6) scale(-0.82,1)"><text x="0" y="0" font-family="Liberation Sans" font-weight="bold" font-size="16" fill="#8a3593">R</text></g><path d="M15.5 0.8 V30" stroke="#c4c4c4" stroke-width="1.8"/><path d="M5 9.3 Q15 3 24 7.5" fill="none" stroke="#c4c4c4" stroke-width="1.1"/><path d="M23 5 L28 8.3 L22.6 10 Z" fill="#c4c4c4"/></svg>
<div style="left:1482.5px;top:676.7px;width:1px;height:41.3px;background:#2c2c2c"></div>
<svg style="left:1494px;top:683px" width="6" height="28"><rect x="1" y="1" width="12" height="26" fill="#3e4150" stroke="#bdbdbd" stroke-width="1"/><circle cx="4" cy="8" r="1.8" fill="#d8b84c"/><path d="M1 20 L6 14 V26 H1Z" fill="#3c8a66"/></svg></body></html>
